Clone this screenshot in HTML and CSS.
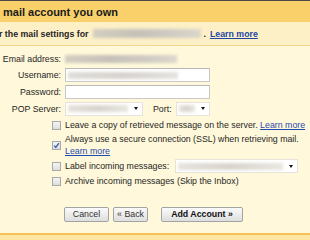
FILE: index.html
```html
<!DOCTYPE html>
<html>
<head>
<meta charset="utf-8">
<link rel="stylesheet" href="styles.css">
</head>
<body>
<div class="page">
  <div class="hdr">mail account you own</div>
  <div class="sub">
    <span class="subtxt">r the mail settings for</span>
    <span class="blur b-sub"></span>
    <span class="dot">.</span>
    <a class="lm-b" href="#">Learn more</a>
  </div>
  <div class="main">
    <div class="fields">
      <div class="lbl">Email address:</div>
      <div class="val"><span class="blur b-email"></span></div>
      <div class="lbl">Username:</div>
      <div class="val"><div class="inp"><span class="blur b-user"></span></div></div>
      <div class="lbl">Password:</div>
      <div class="val"><div class="inp"></div></div>
      <div class="lbl">POP Server:</div>
      <div class="val pop">
        <div class="sel s-pop"><span class="blur b-sel"></span><i class="arr"></i></div>
        <span class="port">Port:</span>
        <div class="sel s-port"><span class="blur b-sel"></span><i class="arr"></i></div>
      </div>
    </div>
    <div class="opts">
      <div class="opt"><span class="cb"></span><span class="otxt nw">Leave a copy of retrieved message on the server. <a class="lm" href="#">Learn more</a></span></div>
      <div class="opt"><span class="cb on"><svg viewBox="0 0 9 9" width="9" height="9"><path d="M2.2 4.6 L3.8 6.4 L6.9 2.2" fill="none" stroke="#3d5fae" stroke-width="1.4"/></svg></span><span class="otxt">Always use a secure connection (SSL) when retrieving mail. <a class="lm" href="#">Learn more</a></span></div>
      <div class="opt"><span class="cb"></span><span class="otxt nw">Label incoming messages:</span><div class="sel s-label"><span class="blur b-sel"></span><i class="arr"></i></div></div>
      <div class="opt"><span class="cb"></span><span class="otxt nw">Archive incoming messages (Skip the Inbox)</span></div>
    </div>
    <div class="btns">
      <button class="btn b-cancel">Cancel</button>
      <button class="btn b-back">« Back</button>
      <button class="btn b-add">Add Account »</button>
    </div>
  </div>
  <div class="foot"></div>
</div>
</body>
</html>
```
FILE: styles.css
```css
html, body {
  margin: 0;
  padding: 0;
}
body {
  font-family: "Liberation Sans", Arial, sans-serif;
  color: #262626;
  font-size: 8.8px;
  overflow: hidden;
}
.page {
  width: 310px;
  height: 240px;
  display: flex;
  flex-direction: column;
  border-top: 1px solid #4a4a4a;
  box-sizing: border-box;
}
.hdr {
  height: 21px;
  line-height: 22px;
  background: #f9d06a;
  font-weight: bold;
  font-size: 11px;
  padding-left: 3px;
  color: #1a1a1a;
}
.sub {
  height: 23px;
  background: #fdf0c6;
  border-bottom: 1px solid #f2d88e;
  display: flex;
  align-items: center;
  font-weight: bold;
  font-size: 8.8px;
  white-space: nowrap;
}
.subtxt {
  margin-left: -1px;
}
.blur {
  display: block;
  background: linear-gradient(90deg, #d4cec2, #c6c1b8 40%, #cfcac1 70%, #dcd7cd);
  filter: blur(1.8px);
}
.b-sub {
  width: 108px;
  height: 9px;
  margin-left: 5px;
}
.dot {
  margin-left: 2px;
}
.lm-b {
  color: #2346a6;
  text-decoration: underline;
  margin-left: 4px;
}
.main {
  flex: 1;
  background: #fff8da;
  padding-top: 7px;
}
.fields {
  display: grid;
  grid-template-columns: 61px 1fr;
  grid-template-rows: 12px 14px 14px 13px;
  column-gap: 4px;
  row-gap: 3px;
}
.lbl {
  text-align: right;
  align-self: center;
  line-height: 12px;
  white-space: nowrap;
}
.val {
  display: flex;
  align-items: center;
}
.b-email {
  width: 112px;
  height: 8px;
}
.inp {
  width: 141px;
  height: 12px;
  background: #fff;
  border: 1px solid #c9c9c9;
  border-top-color: #b8b8b8;
  display: flex;
  align-items: center;
  padding-left: 2px;
  box-sizing: content-box;
}
.b-user {
  width: 110px;
  height: 7px;
  background: linear-gradient(90deg, #e0ddd8, #d6d3ce 50%, #e6e3df);
}
.sel {
  height: 12px;
  background: #fff;
  border: 1px solid #e6e3da;
  display: flex;
  align-items: center;
  padding: 0 4px 0 2px;
  box-sizing: content-box;
}
.sel .b-sel {
  flex: 1;
  height: 7px;
  background: linear-gradient(90deg, #e6e3dd, #d8d4cd 50%, #eae7e1);
}
.arr {
  width: 0;
  height: 0;
  border-left: 2.5px solid transparent;
  border-right: 2.5px solid transparent;
  border-top: 3px solid #111;
  margin-left: 6px;
}
.s-pop {
  width: 70px;
}
.port {
  margin-left: 10px;
}
.s-port {
  width: 26px;
  margin-left: 4px;
}
.opts {
  margin-top: 4px;
  display: flex;
  flex-direction: column;
  gap: 2px;
}
.opt {
  display: flex;
  align-items: center;
  padding-left: 52px;
  line-height: 12px;
}
.cb {
  width: 7px;
  height: 7px;
  border: 1px solid #a9a9a9;
  background: linear-gradient(#f4f4f4, #dedede);
  margin-right: 4px;
  flex: none;
  position: relative;
}
.cb svg {
  position: absolute;
  left: -1px;
  top: -1px;
}
.otxt {
  width: 245px;
}
.nw {
  white-space: nowrap;
  width: auto;
}
.lm {
  color: #1f4bb0;
  text-decoration: underline;
}
.s-label {
  width: 115px;
  height: 12px;
  margin-left: 6px;
}
.btns {
  margin-top: 20px;
  display: flex;
  padding-left: 64px;
}
.btn {
  font-family: "Liberation Sans", Arial, sans-serif;
  font-size: 8.8px;
  height: 15px;
  line-height: 13px;
  border: 1px solid #a3a3a3;
  border-radius: 2px;
  background: linear-gradient(#fbfbfb, #dedede);
  color: #333;
  padding: 0;
  margin: 0;
}
.b-cancel {
  width: 45px;
}
.b-back {
  width: 35px;
  margin-left: 4px;
}
.b-add {
  width: 82px;
  margin-left: 13px;
  font-weight: bold;
  color: #111;
}
.foot {
  height: 5px;
  border-top: 2px solid #f4c358;
  background: #fde5a4;
}
```
